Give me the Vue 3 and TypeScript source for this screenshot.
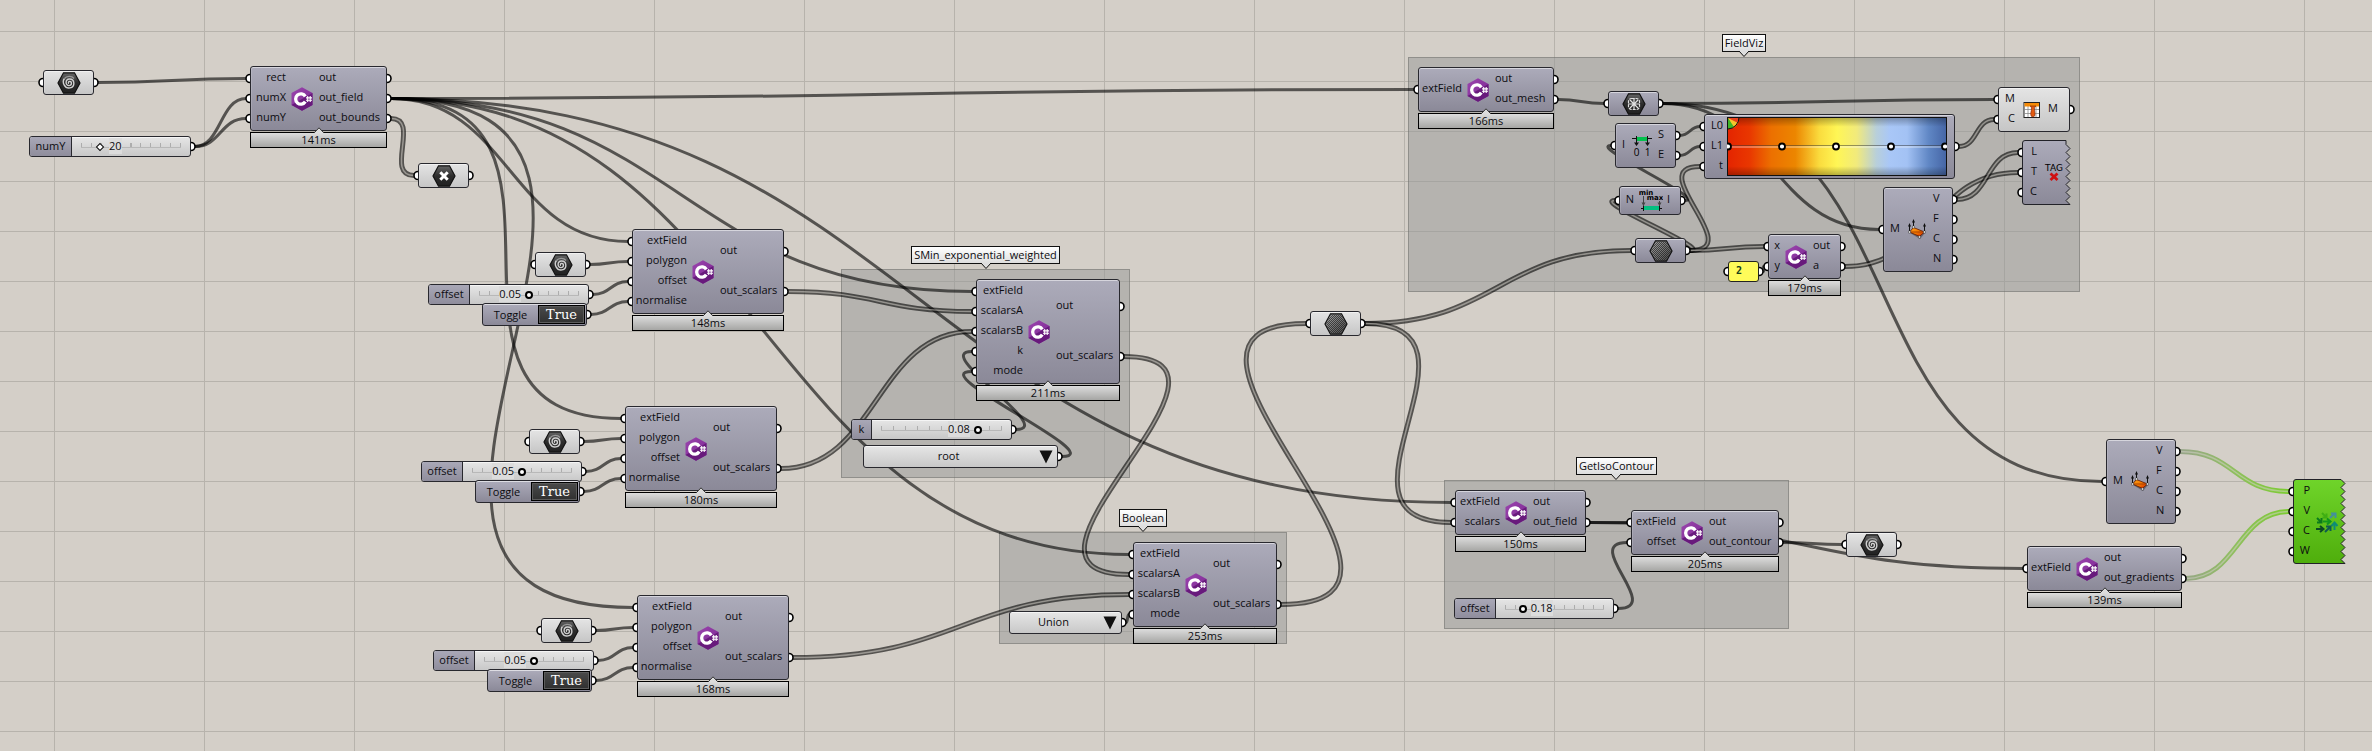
<script setup lang="ts">
type IconName = 'csharp' | 'spiral' | 'cross' | 'number' | 'mesh' | 'interval' | 'bounds' | 'meshparts' | 'paint' | 'tag' | 'vectors' | 'none'

interface GraphNode {
  id: string
  kind: 'component' | 'param' | 'slider' | 'toggle' | 'list' | 'panel' | 'gradient'
  x: number
  y: number
  w: number
  h: number
  ins?: string[]
  outs?: string[]
  inW?: number
  icon?: IconName
  time?: string
  tone?: 'light' | 'green'
  jagged?: boolean
  label?: string
  labelW?: number
  value?: string
  percent?: number
  options?: string[]
}

interface Wire {
  from: string
  to: string
  double?: boolean
  reach?: number
  green?: boolean
}

const component = (id: string, x: number, y: number, w: number, h: number, inW: number, ins: string[], outs: string[], icon: IconName, extra: Partial<GraphNode> = {}): GraphNode =>
  ({ id, kind: 'component', x, y, w, h, inW, ins, outs, icon, ...extra })

const param = (id: string, x: number, y: number, icon: IconName, tone?: 'light'): GraphNode =>
  ({ id, kind: 'param', x, y, w: 51, h: 25, icon, tone, ins: [''], outs: [''] })

const slider = (id: string, x: number, y: number, w: number, label: string, labelW: number, value: string, percent: number): GraphNode =>
  ({ id, kind: 'slider', x, y, w, h: 21, label, labelW, value, percent, outs: [''] })

const toggle = (id: string, x: number, y: number): GraphNode =>
  ({ id, kind: 'toggle', x, y, w: 105, h: 23, label: 'Toggle', value: 'True', outs: [''] })

const offsetIns = ['extField', 'polygon', 'offset', 'normalise']
const scalarOuts = ['out', 'out_scalars']

const nodes: GraphNode[] = [
  param('rectParam', 43, 70, 'spiral', 'light'),
  slider('num', 29, 136, 162, 'numY', 42, '20', 20),
  component('field', 250, 66, 137, 65, 36, ['rect', 'numX', 'numY'], ['out', 'out_field', 'out_bounds'], 'csharp', { time: '141ms' }),
  param('boundsParam', 418, 163, 'cross', 'light'),

  param('polyA', 535, 252, 'spiral', 'light'),
  slider('offA', 428, 284, 161, 'offset', 41, '0.05', 50),
  toggle('togA', 482, 303),
  component('shapeA', 632, 229, 152, 85, 55, offsetIns, scalarOuts, 'csharp', { time: '148ms' }),

  param('polyB', 529, 429, 'spiral', 'light'),
  slider('offB', 421, 461, 161, 'offset', 41, '0.05', 50),
  toggle('togB', 475, 480),
  component('shapeB', 625, 406, 152, 85, 55, offsetIns, scalarOuts, 'csharp', { time: '180ms' }),

  param('polyC', 541, 618, 'spiral', 'light'),
  slider('offC', 433, 650, 161, 'offset', 41, '0.05', 50),
  toggle('togC', 487, 669),
  component('shapeC', 637, 595, 152, 85, 55, offsetIns, scalarOuts, 'csharp', { time: '168ms' }),

  component('smin', 976, 279, 144, 105, 47, ['extField', 'scalarsA', 'scalarsB', 'k', 'mode'], scalarOuts, 'csharp', { time: '211ms' }),
  slider('k', 851, 419, 161, 'k', 20, '0.08', 80),
  { id: 'root', kind: 'list', x: 863, y: 445, w: 195, h: 23, label: 'mode', value: 'root', options: ['root', 'exponential', 'power'], outs: [''] },

  component('bool', 1133, 542, 144, 85, 47, ['extField', 'scalarsA', 'scalarsB', 'mode'], scalarOuts, 'csharp', { time: '253ms' }),
  { id: 'union', kind: 'list', x: 1009, y: 611, w: 113, h: 23, label: 'mode', value: 'Union', options: ['Union', 'Intersection', 'Difference'], outs: [''] },

  param('scalars', 1310, 311, 'number', 'light'),

  component('mesh', 1418, 67, 136, 45, 44, ['extField'], ['out', 'out_mesh'], 'csharp', { time: '166ms' }),
  param('meshParam', 1608, 91, 'mesh'),
  component('ends', 1615, 123, 61, 45, 10, ['I'], ['S', 'E'], 'interval'),
  component('minmax', 1619, 186, 62, 29, 15, ['N'], ['I'], 'bounds'),
  param('numbers', 1635, 238, 'number'),
  { id: 'gradient', kind: 'gradient', x: 1704, y: 114, w: 251, h: 65, ins: ['L0', 'L1', 't'], outs: [''], inW: 19 },
  component('round', 1768, 234, 73, 45, 12, ['x', 'y'], ['out', 'a'], 'csharp', { time: '179ms' }),
  { id: 'panel', kind: 'panel', x: 1728, y: 261, w: 31, h: 21, value: '2', label: 'digits', ins: [''], outs: [''] },
  component('partsA', 1883, 187, 70, 85, 17, ['M'], ['V', 'F', 'C', 'N'], 'meshparts'),
  component('paint', 1998, 87, 72, 45, 17, ['M', 'C'], ['M'], 'paint', { tone: 'light' }),
  component('tag', 2022, 140, 49, 65, 15, ['L', 'T', 'C'], [], 'tag', { jagged: true }),

  component('iso', 1455, 490, 131, 45, 45, ['extField', 'scalars'], ['out', 'out_field'], 'csharp', { time: '150ms' }),
  component('contour', 1631, 510, 148, 45, 45, ['extField', 'offset'], ['out', 'out_contour'], 'csharp', { time: '205ms' }),
  slider('isoOff', 1454, 598, 160, 'offset', 41, '0.18', 18),
  param('curves', 1846, 532, 'spiral', 'light'),

  component('partsB', 2106, 439, 70, 85, 17, ['M'], ['V', 'F', 'C', 'N'], 'meshparts'),
  component('grad', 2027, 546, 155, 45, 44, ['extField'], ['out', 'out_gradients'], 'csharp', { time: '139ms' }),
  component('vectors', 2293, 479, 53, 85, 17, ['P', 'V', 'C', 'W'], [], 'vectors', { tone: 'green', jagged: true }),
]

const groups = [
  { label: 'SMin_exponential_weighted', x: 841, y: 269, w: 289, h: 209 },
  { label: 'Boolean', x: 999, y: 532, w: 288, h: 112 },
  { label: 'FieldViz', x: 1408, y: 57, w: 672, h: 235 },
  { label: 'GetIsoContour', x: 1444, y: 480, w: 345, h: 149 },
]

const wires: Wire[] = [
  { from: 'rectParam.0', to: 'field.0' },
  { from: 'num.0', to: 'field.1', reach: 26 },
  { from: 'num.0', to: 'field.2' },
  { from: 'field.1', to: 'mesh.0' },
  { from: 'field.1', to: 'shapeA.0' },
  { from: 'field.1', to: 'shapeB.0' },
  { from: 'field.1', to: 'shapeC.0' },
  { from: 'field.1', to: 'smin.0' },
  { from: 'field.1', to: 'bool.0' },
  { from: 'field.1', to: 'iso.0' },
  { from: 'field.2', to: 'boundsParam.0', double: true, reach: 30 },
  ...['A', 'B', 'C'].flatMap((s): Wire[] => [
    { from: `poly${s}.0`, to: `shape${s}.1` },
    { from: `off${s}.0`, to: `shape${s}.2` },
    { from: `tog${s}.0`, to: `shape${s}.3` },
  ]),
  { from: 'shapeA.1', to: 'smin.1', double: true },
  { from: 'shapeB.1', to: 'smin.2', double: true },
  { from: 'shapeC.1', to: 'bool.2', double: true },
  { from: 'k.0', to: 'smin.3', reach: 42 },
  { from: 'root.0', to: 'smin.4', reach: 50 },
  { from: 'smin.1', to: 'bool.1', double: true },
  { from: 'union.0', to: 'bool.3', reach: 2 },
  { from: 'bool.1', to: 'scalars.0', double: true },
  { from: 'scalars.0', to: 'numbers.0', double: true },
  { from: 'scalars.0', to: 'iso.1', double: true },
  { from: 'iso.1', to: 'contour.0' },
  { from: 'iso.1', to: 'grad.0' },
  { from: 'isoOff.0', to: 'contour.1' },
  { from: 'contour.1', to: 'curves.0' },
  { from: 'mesh.1', to: 'meshParam.0' },
  { from: 'meshParam.0', to: 'paint.0' },
  { from: 'meshParam.0', to: 'partsA.0' },
  { from: 'meshParam.0', to: 'partsB.0' },
  { from: 'minmax.0', to: 'ends.0', reach: 24 },
  { from: 'ends.0', to: 'gradient.0' },
  { from: 'ends.1', to: 'gradient.1' },
  { from: 'numbers.0', to: 'minmax.0', double: true, reach: 24 },
  { from: 'numbers.0', to: 'gradient.2', double: true },
  { from: 'numbers.0', to: 'round.0', double: true },
  { from: 'panel.0', to: 'round.1', reach: 2 },
  { from: 'round.1', to: 'tag.1', double: true },
  { from: 'partsA.0', to: 'tag.0', double: true },
  { from: 'gradient.0', to: 'paint.1', double: true },
  { from: 'partsB.0', to: 'vectors.0', double: true, green: true },
  { from: 'grad.1', to: 'vectors.1', double: true, green: true },
]

const byId = new Map(nodes.map((n) => [n.id, n]))

function portY(n: GraphNode, index: number, count: number): number {
  return n.y + 2.5 + ((n.h - 5) * (index + 0.5)) / count
}

function portAt(ref: string, side: 'in' | 'out') {
  const [id, index] = ref.split('.')
  const n = byId.get(id)!
  const count = (side === 'in' ? n.ins : n.outs)!.length
  return { x: side === 'in' ? n.x - 4 : n.x + n.w + 4, y: portY(n, Number(index), count) }
}

const paths = wires.map((wire) => {
  const a = portAt(wire.from, 'out')
  const b = portAt(wire.to, 'in')
  const reach = wire.reach ?? Math.max(Math.abs(b.x - a.x) * 0.5, Math.abs(b.y - a.y) * 0.7)
  return { ...wire, d: `M${a.x} ${a.y}C${a.x + reach} ${a.y} ${b.x - reach} ${b.y} ${b.x} ${b.y}` }
})

const grips = nodes.flatMap((n) => [
  ...(n.ins ?? []).map((_, i) => ({ x: n.x, y: portY(n, i, n.ins!.length) })),
  ...(n.outs ?? []).map((_, i) => ({ x: n.x + n.w, y: portY(n, i, n.outs!.length) })),
])

function box(n: { x: number; y: number; w: number }) {
  return { left: `${n.x}px`, top: `${n.y}px`, width: `${n.w}px` }
}

function jaggedPath(n: GraphNode): string {
  const right = n.w - 1
  let d = `M${right - 4} 0.5H3Q0.5 0.5 0.5 3V${n.h - 3}Q0.5 ${n.h - 0.5} 3 ${n.h - 0.5}H${right}`
  let out = false
  for (let y = n.h - 4.5; y > 1; y -= 4) {
    d += `L${out ? right : right - 4} ${y}`
    out = !out
  }
  return d + 'Z'
}

const stops = [
  [0, '#e42400'], [10, '#e93700'], [20, '#ec7000'], [31, '#ec8600'], [42, '#fadc3e'], [50, '#fff655'],
  [59, '#f1ea7c'], [68, '#b8cfda'], [74, '#a9c7f7'], [82, '#a3c2f4'], [92, '#5f86c4'], [100, '#4565a5'],
] as const
const handles = [1, 55, 109, 164, 218]
</script>

<template>
  <main class="canvas">
    <figure v-for="g in groups" :key="g.label" class="group" :style="{ ...box(g), height: g.h + 'px' }">
      <figcaption class="tagline">
        {{ g.label }}
        <svg class="pointer" width="12" height="6" viewBox="0 0 12 6"><path d="M1 0L6 5.5L11 0" fill="#dedede" stroke="#111" /><path d="M2 0H10" stroke="#dedede" /></svg>
      </figcaption>
    </figure>

    <svg class="wires" aria-hidden="true">
      <defs>
        <linearGradient id="fadeGreen" gradientUnits="userSpaceOnUse" x1="2180" y1="0" x2="2289" y2="0">
          <stop offset="0" stop-color="#98a58a" /><stop offset="0.5" stop-color="#8fbf5e" /><stop offset="1" stop-color="#7ccc30" />
        </linearGradient>
        <linearGradient id="csTop" x1="0" y1="0" x2="1" y2="1"><stop offset="0" stop-color="#9b45ae" /><stop offset="1" stop-color="#7a2590" /></linearGradient>
        <linearGradient id="hexDark" x1="0" y1="0" x2="0" y2="1"><stop offset="0" stop-color="#666" /><stop offset="0.5" stop-color="#2c2c2c" /><stop offset="1" stop-color="#222" /></linearGradient>
        <linearGradient id="hexGrey" x1="0" y1="0" x2="1" y2="1"><stop offset="0" stop-color="#aaa" /><stop offset="1" stop-color="#444" /></linearGradient>
        <pattern id="checks" width="2" height="2" patternUnits="userSpaceOnUse"><path d="M0 0h1v1H0zM1 1h1v1H1z" fill="#111" fill-opacity="0.6" /></pattern>
        <linearGradient id="ramp"><stop v-for="s in stops" :key="s[0]" :offset="s[0] + '%'" :stop-color="s[1]" /></linearGradient>
        <linearGradient id="rampShade" x1="0" y1="0" x2="0" y2="1">
          <stop offset="0" stop-opacity="0.3" /><stop offset="0.16" stop-opacity="0" /><stop offset="0.84" stop-opacity="0" /><stop offset="1" stop-opacity="0.3" />
        </linearGradient>
        <linearGradient id="bodyGrey" x1="0" y1="0" x2="0" y2="1"><stop offset="0" stop-color="#acabba" /><stop offset="1" stop-color="#8b8998" /></linearGradient>
        <linearGradient id="bodyGreen" x1="0" y1="0" x2="0" y2="1"><stop offset="0" stop-color="#6fd42a" /><stop offset="1" stop-color="#4fae0c" /></linearGradient>
        <linearGradient id="flame" x1="0" y1="0" x2="1" y2="1"><stop offset="0" stop-color="#ffa51c" /><stop offset="0.5" stop-color="#f47a00" /><stop offset="1" stop-color="#c81e00" /></linearGradient>
      </defs>
      <g v-for="p in paths" :key="p.from + p.to">
        <path :d="p.d" class="wire" :class="{ wide: p.double, green: p.green }" />
        <path v-if="p.double" :d="p.d" class="core" />
      </g>
      <circle v-for="(g, i) in grips" :key="i" :cx="g.x" :cy="g.y" r="4" class="grip" />
    </svg>

    <section v-for="n in nodes" :key="n.id" class="node" :class="[n.kind, n.tone, n.icon, { jagged: n.jagged }]" :style="box(n)">
      <div v-if="n.kind === 'component' || n.kind === 'param' || n.kind === 'gradient'" class="body" :style="{ height: n.h + 'px' }">
        <svg v-if="n.jagged" class="shape" :width="n.w" :height="n.h" aria-hidden="true">
          <path :d="jaggedPath(n)" :fill="n.tone === 'green' ? 'url(#bodyGreen)' : 'url(#bodyGrey)'" stroke="#222228" />
        </svg>
        <ul v-if="n.kind !== 'param'" class="ports ins" :style="{ width: n.inW! - 1 + 'px' }">
          <li v-for="(t, i) in n.ins" :key="i">{{ t }}</li>
        </ul>

        <svg v-if="n.kind === 'gradient'" class="ramp" width="220" height="59" viewBox="0 0 220 59" role="img" aria-label="Gradient">
          <rect x="0.5" y="0.5" width="219" height="58" fill="url(#ramp)" />
          <rect x="0.5" y="0.5" width="219" height="58" fill="url(#rampShade)" stroke="#111" />
          <path d="M1 1H12A11 11 0 0 1 9 8.5L1 1Z" fill="#e8401c" />
          <path d="M1 1L11 6A11 11 0 0 1 6 11L1 1Z" fill="#f5c52c" />
          <path d="M1 1L7 10A11 11 0 0 1 1 12Z" fill="#3fb428" />
          <path d="M12 0A11.500 11.500 0 0 1 1 12" fill="none" stroke="#111" />
          <path d="M1 28.500H219" stroke="#333" stroke-opacity="0.5" />
          <path d="M1 30H219" stroke="#fff" stroke-opacity="0.6" />
          <circle v-for="h in handles" :key="h" :cx="h" cy="29.500" r="3" fill="#fff" stroke="#000" stroke-width="1.800" />
        </svg>

        <span v-else class="glyph">
          <svg v-if="n.icon === 'csharp'" width="24" height="24" viewBox="0 0 24 24">
            <path d="M12 .3L22.500 6V18L12 23.700L1.500 18V6Z" fill="url(#csTop)" />
            <path d="M22.500 6V18L12 23.700L1.500 18Z" fill="#681a7c" />
            <path d="M15.300 9.300A5.200 5.200 0 1 0 15.300 14.700" fill="none" stroke="#fff" stroke-width="3.300" />
            <path d="M17.700 9V15M20.200 9V15M16 10.900H22M16 13.200H22" stroke="#fff" stroke-width="1.100" />
          </svg>
          <svg v-else-if="n.kind === 'param'" width="24" height="22" viewBox="0 0 24 22">
            <path d="M6.500 .8H17.500L23 11L17.500 21.200H6.500L1 11Z" :fill="n.icon === 'number' ? 'url(#hexGrey)' : 'url(#hexDark)'" stroke="#111" stroke-width="1.200" />
            <path v-if="n.icon === 'number'" d="M7 1.500H17L22 11L17 20.500H7L2 11Z" fill="url(#checks)" />
            <g v-else-if="n.icon === 'spiral'" fill="none" stroke="#d0d0d0" stroke-width="1.400">
              <path d="M12 11.500C11 11.200 11.200 9.300 12.800 9.400C15 9.600 15.200 13.400 12 13.600C8.300 13.700 7.800 7.300 12.500 7C17.800 6.900 18.600 14.800 13 15.900C7.500 16.800 4.600 10 7.500 6.500" />
              <path d="M7.500 6.500C9.500 4 14.500 3.400 17 6.500" stroke="#999" />
            </g>
            <path v-else-if="n.icon === 'cross'" d="M8.300 7.300L15.700 14.700M15.700 7.300L8.300 14.700" stroke="#fff" stroke-width="3" />
            <g v-else fill="none" stroke="#e0e0e0" stroke-width="1.200">
              <rect x="6.500" y="5.500" width="11" height="11" rx="3" stroke-dasharray="3 1" />
              <path d="M12 5V17M6 11H18M8 7L16 15M16 7L8 15" />
            </g>
          </svg>
          <svg v-else-if="n.icon === 'interval'" width="24" height="24" viewBox="0 0 24 24">
            <path d="M2 4.500H22" stroke="#111" /><rect x="7" y="3" width="11" height="4" fill="#04c04e" />
            <path d="M6.500 2V11M17.500 2V11" stroke="#111" /><path d="M4 8.500H9L6.500 12ZM15 8.500H20L17.500 12Z" fill="#111" />
            <text x="6.500" y="22" class="digit">0</text><text x="17.500" y="22" class="digit">1</text>
          </svg>
          <svg v-else-if="n.icon === 'bounds'" width="24" height="26" viewBox="0 0 24 26">
            <text x="7" y="7" class="mini">min</text><text x="16" y="12" class="mini">max</text>
            <path d="M4.500 8V23M20.500 13V23" stroke="#444" /><path d="M2.500 14.500H6.500L4.500 18ZM18.500 14.500H22.500L20.500 18Z" fill="#444" />
            <rect x="5" y="18" width="15" height="4" fill="#04bf80" /><path d="M2 20.500H5M20 20.500H23M4.500 18V23M20.500 18V23" stroke="#111" />
          </svg>
          <svg v-else-if="n.icon === 'meshparts'" width="24" height="24" viewBox="0 0 24 24">
            <path d="M5 15L10 11L20 15L15 21Z" fill="#222" fill-opacity="0.4" />
            <path d="M4.500 14L8.500 9.500L19.500 14L14.500 18.500Z" fill="url(#flame)" stroke="#5a1500" stroke-width="0.800" /><path d="M4.500 14H19.500" stroke="#8a2a00" stroke-width="0.700" />
            <path d="M4.500 14V6M8.500 9V2M19.500 14V6" stroke="#111" /><path d="M3 8.500L4.500 5L6 8.500ZM7 4.500L8.500 1L10 4.500ZM18 8.500L19.500 5L21 8.500Z" fill="#111" />
            <path d="M3.500 13h2v2H3.500zM7.500 8h2v2H7.500zM18.500 13h2v2H18.500zM13.500 18h2v2H13.500z" fill="#fff" stroke="#333" stroke-width="0.500" />
          </svg>
          <svg v-else-if="n.icon === 'paint'" width="18" height="18" viewBox="0 0 18 18">
            <rect x="1" y="1.500" width="15.500" height="15" fill="#fff" stroke="#222" /><path d="M1 8.500H16M1 12.500H16M5 4V16M9 4V16M13 4V16" stroke="#888" stroke-width="0.800" />
            <rect x="1.500" y="2" width="14.500" height="3.500" fill="#f58a07" />
            <path d="M7 5C8.500 5 8.600 7 8.300 9.500C7 14 8 15.800 10 15.800C12.300 15.800 12.300 13 11.600 10C11.200 7 11.500 5.500 13 5Z" fill="#e25a10" stroke="#7c2000" stroke-width="0.600" />
          </svg>
          <svg v-else-if="n.icon === 'tag'" width="24" height="24" viewBox="0 0 24 24">
            <text x="12" y="10" class="tagtext">TAG</text>
            <path d="M8.500 12.500L15.500 19M15.500 12.500L8.500 19" stroke="#d01010" stroke-width="2.800" />
          </svg>
          <svg v-else-if="n.icon === 'vectors'" width="24" height="24" viewBox="0 0 24 24">
            <g fill="none" stroke-width="2">
              <path d="M7 3L11 7M11.500 3.500V7.500H7.500" stroke="#3fae12" /><path d="M15 8L20 3M16 3.500H20.500V8" stroke="#43919a" />
              <path d="M2 8L6 12M6.500 8V12.500H2" stroke="#0b7a1c" /><path d="M8 11.500H15M12 8.500L15.500 11.500L12 14.500" stroke="#10961c" />
              <path d="M19.500 20V13M16.500 16L19.500 12.500L22.500 16" stroke="#0f8c74" />
              <path d="M1 19H8M5 16L8.500 19L5 22" stroke="#0c4a24" /><path d="M10 22L15 17M11 16.500H15.500V21" stroke="#0e5c50" />
            </g>
          </svg>
        </span>

        <ul v-if="n.kind === 'component' && n.outs!.length" class="ports outs">
          <li v-for="(t, i) in n.outs" :key="i">{{ t }}</li>
        </ul>
      </div>

      <p v-if="n.time" class="timer">
        {{ n.time }}
        <svg class="tip" width="12" height="6" viewBox="0 0 12 6"><path d="M1 6L6 .8L11 6" fill="#dcdcdc" stroke="#333" /></svg>
      </p>

      <div v-if="n.kind === 'slider'" class="strip">
        <label class="name" :for="n.id" :style="{ width: n.labelW + 'px' }">{{ n.label }}</label>
        <div class="rail">
          <output class="reading" :for="n.id" :style="n.percent! < 50 ? { left: `calc(17px + (100% - 18px) * ${n.percent! / 100})` } : { right: `calc(17px + (100% - 18px) * ${1 - n.percent! / 100})` }">{{ n.value }}</output>
          <input :id="n.id" type="range" min="0" max="100" :value="n.percent" :class="{ diamond: n.id === 'num' }" />
        </div>
      </div>

      <div v-if="n.kind === 'toggle'" class="strip">
        <span :id="n.id" class="switchname">{{ n.label }}</span>
        <button type="button" aria-pressed="true" :aria-describedby="n.id">{{ n.value }}</button>
      </div>

      <div v-if="n.kind === 'list'" class="strip">
        <select :id="n.id" :aria-label="n.label">
          <option v-for="o in n.options" :key="o" :selected="o === n.value">{{ o }}</option>
        </select>
        <svg class="arrow" width="14" height="14" viewBox="0 0 14 14" aria-hidden="true"><path d="M.5 .5H13.500L7 13.500Z" fill="#111" /></svg>
      </div>

      <input v-if="n.kind === 'panel'" class="note" type="text" :value="n.value" :aria-label="n.label" />
    </section>
  </main>
</template>

<style>
body {
  margin: 0;
  background: #d4cfc8;
}
</style>

<style scoped>
.canvas {
  position: relative;
  min-height: 100vh;
  overflow: hidden;
  font: 11px/16px "Open Sans", "Noto Sans", sans-serif;
  color: #0c0c10;
  background-color: #d4cfc8;
  background-image:
    linear-gradient(90deg, #b7b3ac 1px, transparent 1px),
    linear-gradient(#b7b3ac 1px, transparent 1px);
  background-size: 150px 100%, 100% 50px;
  background-position: 54px 0, 0 31px;
}
.group {
  position: absolute;
  box-sizing: border-box;
  margin: 0;
  display: flex;
  justify-content: center;
  background: rgba(150, 152, 150, 0.5);
  border: 1px solid rgba(90, 90, 85, 0.4);
}
.tagline {
  position: relative;
  box-sizing: border-box;
  height: 18px;
  margin-top: -24px;
  padding: 0 2px;
  line-height: 15px;
  white-space: nowrap;
  border: 1px solid #111;
  background: linear-gradient(#fff, #dedede);
}
.pointer {
  position: absolute;
  top: 16px;
  left: calc(50% - 6px);
}
.wires {
  position: absolute;
  inset: 0;
  width: 100%;
  height: 100%;
}
.wire {
  fill: none;
  stroke: rgba(0, 0, 0, 0.6);
  stroke-width: 3;
}
.wire.wide {
  stroke-width: 5;
}
.wire.green {
  stroke: url(#fadeGreen);
}
.core {
  fill: none;
  stroke: rgba(212, 208, 200, 0.55);
  stroke-width: 1.5;
}
.grip {
  fill: #fff;
  stroke: #000;
  stroke-width: 1.6;
}
.node {
  position: absolute;
  display: flex;
  flex-direction: column;
  gap: 1px;
}
.body {
  position: relative;
  box-sizing: border-box;
  display: flex;
  align-items: stretch;
  border: 1px solid #28282e;
  border-radius: 3px;
  background: linear-gradient(#acabba, #8b8998);
  box-shadow: inset 0 1px 0 rgba(255, 255, 255, 0.5), inset 1px 0 0 rgba(255, 255, 255, 0.15);
}
.light .body {
  background: linear-gradient(#e4e4e4, #c6c6c6);
}
.jagged .body {
  border-color: transparent;
  background: none;
  box-shadow: none;
}
.shape {
  position: absolute;
  top: -1px;
  left: -1px;
}
.ports {
  position: relative;
  display: flex;
  flex-direction: column;
  margin: 0;
  padding: 1px 0 2px;
  list-style: none;
}
.ports li {
  flex: 1;
  display: flex;
  align-items: center;
  padding-bottom: 2px;
  white-space: nowrap;
}
.ins li {
  justify-content: flex-end;
}
.glyph {
  position: relative;
  box-sizing: border-box;
  flex: 0 0 33px;
  display: flex;
  align-items: center;
  justify-content: center;
}
.csharp .glyph {
  padding-right: 2px;
}
.param .glyph {
  flex: 1;
}
.ramp {
  margin: 2px 0 0 4px;
}
.digit {
  font: 10px "Open Sans", sans-serif;
  text-anchor: middle;
}
.mini {
  font: bold 7px "DejaVu Sans", sans-serif;
  text-anchor: middle;
}
.tagtext {
  font: 9px "DejaVu Sans", sans-serif;
  text-anchor: middle;
}
.timer {
  position: relative;
  box-sizing: border-box;
  height: 16px;
  margin: 0;
  line-height: 13px;
  text-align: center;
  border: 1px solid #000;
  background: linear-gradient(#dcdcdc, #a6a6a4);
}
.tip {
  position: absolute;
  top: -6px;
  left: calc(50% - 6px);
}
.strip {
  position: relative;
  box-sizing: border-box;
  display: flex;
  height: 21px;
  border: 1px solid #28282e;
  border-radius: 3px;
  background: linear-gradient(#e6e6e6, #c8c8c8);
  box-shadow: inset 0 1px 0 rgba(255, 255, 255, 0.6);
}
.name {
  box-sizing: border-box;
  line-height: 17px;
  text-align: center;
  border-right: 1px solid #28282e;
  border-radius: 2px 0 0 2px;
  background: linear-gradient(#a9a8b7, #8f8d9c);
}
.rail {
  position: relative;
  flex: 1;
  display: flex;
  align-items: center;
  padding: 0 5px;
}
.rail::before {
  content: "";
  position: absolute;
  left: 9px;
  right: 9px;
  top: 6px;
  height: 4px;
  border-bottom: 1px solid #b8b8b8;
  background: repeating-linear-gradient(90deg, #adadad 0 1px, transparent 1px calc((100% - 1px) / 10));
}
.reading {
  position: absolute;
  top: 1px;
  height: 16px;
  line-height: 15px;
  background: #dcdcdc;
}
.rail input {
  position: relative;
  width: 100%;
  height: 19px;
  margin: 0;
  appearance: none;
  background: none;
}
.rail input::-webkit-slider-thumb {
  appearance: none;
  box-sizing: border-box;
  width: 8px;
  height: 8px;
  margin-top: 1px;
  border: 2px solid #000;
  border-radius: 50%;
  background: #fff;
}
.rail input.diamond::-webkit-slider-thumb {
  width: 6px;
  height: 6px;
  border-width: 1px;
  border-radius: 0;
  transform: rotate(45deg);
}
.toggle .strip,
.list .strip {
  height: 23px;
}
.toggle .strip {
  align-items: center;
  background: linear-gradient(#acabba, #8b8998);
}
.switchname {
  flex: 1;
  line-height: 19px;
  text-align: center;
}
button {
  box-sizing: border-box;
  width: 47px;
  height: 19px;
  margin: 0 1px 0 0;
  padding: 0;
  font: 13px/15px "DejaVu Serif", serif;
  color: #fff;
  border: 1px solid #000;
  background: linear-gradient(#4a4a4a, #303030);
  box-shadow: inset 0 0 0 1px #5c5c5c;
}
select {
  width: 100%;
  margin: 0;
  padding: 0 24px 2px 0;
  font: inherit;
  color: inherit;
  text-align: center;
  text-align-last: center;
  appearance: none;
  border: 0;
  background: none;
}
.arrow {
  position: absolute;
  top: 4px;
  right: 4px;
}
.note {
  box-sizing: border-box;
  width: 100%;
  height: 21px;
  padding: 0 7px 2px;
  font: bold 10px "DejaVu Sans Mono", monospace;
  color: #18401c;
  border: 1px solid #222;
  border-radius: 3px;
  background: #fffb5a;
}
</style>
